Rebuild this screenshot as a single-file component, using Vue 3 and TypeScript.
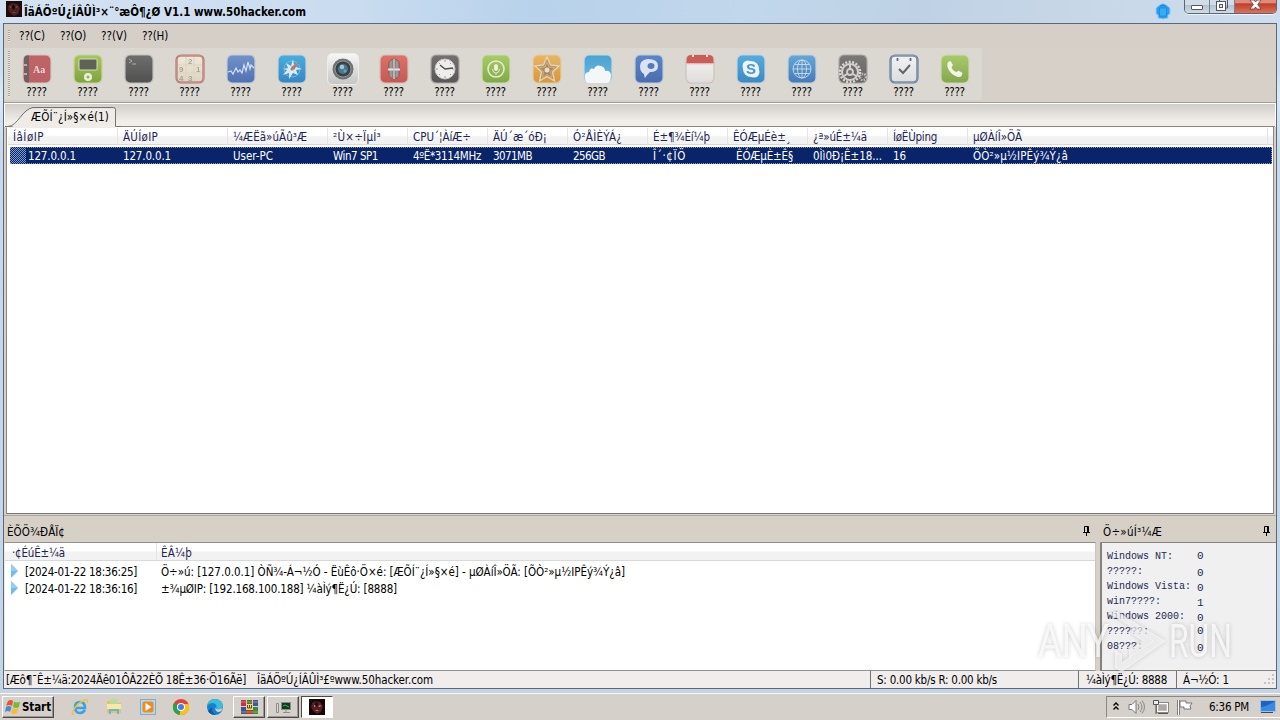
<script setup lang="ts">
import type { Directive } from 'vue'

// Spreads the letters of a label so that it takes up the given width in pixels.
const fitText = (el: HTMLElement, width: number) => {
  el.style.letterSpacing = '0px'
  const natural = el.getBoundingClientRect().width
  const count = (el.textContent ?? '').length
  if (count > 0) el.style.letterSpacing = `${(width - natural) / count}px`
}
const vFit: Directive<HTMLElement, number> = {
  mounted: (el, binding) => fitText(el, binding.value),
  updated: (el, binding) => fitText(el, binding.value),
}

interface Tool { name: string; top: string; bottom: string; edge: string }
interface Column { title: string; titleWidth: number; width: number; value: string; valueWidth: number; indent?: number }

const menus = ['??(C)', '??(O)', '??(V)', '??(H)']

const tools: Tool[] = [
  { name: 'book', top: '#bd5a5e', bottom: '#b8595d', edge: '#d8c4c0' },
  { name: 'player', top: '#a3c653', bottom: '#77a02f', edge: '#c7d3a4' },
  { name: 'terminal', top: '#666666', bottom: '#454545', edge: '#bdbdbd' },
  { name: 'numbers', top: '#f1ebd9', bottom: '#ddd5c2', edge: '#b9706b' },
  { name: 'wave', top: '#6a8dc9', bottom: '#4668b0', edge: '#c3cbd8' },
  { name: 'compass', top: '#3cabdf', bottom: '#2b7fc0', edge: '#c1d2dc' },
  { name: 'camera', top: '#fafafa', bottom: '#c4c4c4', edge: '#efefee' },
  { name: 'mic', top: '#dc6b60', bottom: '#c24f4a', edge: '#dcbdb7' },
  { name: 'clock', top: '#6d6969', bottom: '#4e4b4c', edge: '#a9a5a5' },
  { name: 'micgreen', top: '#a6cb61', bottom: '#78a63a', edge: '#cbdcaf' },
  { name: 'star', top: '#e9b45b', bottom: '#d99031', edge: '#e2cda6' },
  { name: 'cloud', top: '#3c9fd3', bottom: '#6ab5e2', edge: '#c6d7e0' },
  { name: 'chat', top: '#507fc5', bottom: '#3f64ad', edge: '#bdc8dc' },
  { name: 'calendar', top: '#fbfafa', bottom: '#dfdcdb', edge: '#c9c1bd' },
  { name: 'skype', top: '#4aa9df', bottom: '#2f82c4', edge: '#bed4e2' },
  { name: 'globe', top: '#5aa5d8', bottom: '#3972b8', edge: '#bfd0de' },
  { name: 'gear', top: '#747270', bottom: '#5b5a59', edge: '#a5a29f' },
  { name: 'tasks', top: '#f5f6f6', bottom: '#dcdddd', edge: '#60789a' },
  { name: 'phone', top: '#a7ca62', bottom: '#7da343', edge: '#cbdab4' },
]

const columns: Column[] = [
  { title: 'ÍâÍøIP', titleWidth: 31, width: 110, value: '127.0.0.1', valueWidth: 48, indent: 15 },
  { title: 'ÄÚÍøIP', titleWidth: 35, width: 110, value: '127.0.0.1', valueWidth: 48 },
  { title: '¼ÆËã»úÃû³Æ', titleWidth: 74, width: 100, value: 'User-PC', valueWidth: 40 },
  { title: '²Ù×÷ÏµÍ³', titleWidth: 48, width: 80, value: 'Win7 SP1', valueWidth: 45 },
  { title: 'CPU´¦ÀíÆ÷', titleWidth: 58, width: 80, value: '4ºË*3114MHz', valueWidth: 68 },
  { title: 'ÄÚ´æ´óÐ¡', titleWidth: 54, width: 80, value: '3071MB', valueWidth: 39 },
  { title: 'Ó²ÅÌÈÝÁ¿', titleWidth: 49, width: 80, value: '256GB', valueWidth: 32 },
  { title: 'É±¶¾Èí¼þ', titleWidth: 57, width: 80, value: 'Î´·¢ÏÖ', valueWidth: 33 },
  { title: 'ÊÓÆµÉè±¸', titleWidth: 58, width: 80, value: 'ÊÓÆµÈ±Ê§', valueWidth: 57, indent: 3 },
  { title: '¿ª»úÊ±¼ä', titleWidth: 54, width: 80, value: '0Ìì0Ð¡Ê±18...', valueWidth: 69 },
  { title: 'ÍøËÙping', titleWidth: 44, width: 80, value: '16', valueWidth: 13 },
  { title: 'µØÀíÎ»ÖÃ', titleWidth: 49, width: 300, value: 'ÕÒ²»µ½IPÊý¾Ý¿â', valueWidth: 95 },
]

const logs = [
  { time: '[2024-01-22 18:36:25]', text: 'Ö÷»ú: [127.0.0.1] ÒÑ¾-Á¬½Ó - ËùÊô·Ö×é: [ÆÕÍ¨¿Í»§×é] - µØÀíÎ»ÖÃ: [ÕÒ²»µ½IPÊý¾Ý¿â]', width: 464 },
  { time: '[2024-01-22 18:36:16]', text: '±¾µØIP: [192.168.100.188] ¼àÌý¶Ë¿Ú: [8888]', width: 236 },
]

const statNames = ['Windows NT:', '?????:', 'Windows Vista:', 'win7????:', 'Windows 2000:', '??????:', '08???:']
const statValues = [0, 0, 0, 1, 0, 0, 0]
</script>

<template>
  <div class="screen">
    <header class="titlebar">
      <svg class="app-icon" width="16" height="16" viewBox="0 0 16 16">
        <rect width="16" height="16" fill="#1c0c0e" />
        <path d="M3 4l3-2 5 1 3 4-2 6-4 2-4-3-2-4z" fill="#4b2223" />
        <path d="M3 5l3 1-2 1zM9 6l3-1-1 2zM6 11h4l-2 1z" fill="#b93a35" />
        <path d="M7 3l2 3-1 3-2-2z" fill="#0d0608" />
      </svg>
      <b class="title"><span v-fit="282">ÎäÁÖºÚ¿ÍÂÛÌ³×¨°æÔ¶¿Ø V1.1 www.50hacker.com</span></b>
      <span class="spacer"></span>
      <svg class="badge" width="18" height="18" viewBox="0 0 18 18">
        <path d="M5 3.500Q9 0 13 3.500l3 2.500v6l-2 1v3q-5 2-10 0v-3l-2-1V6z" fill="#2d9cec" stroke="#8bcff6" />
        <path d="M5.500 6h7v8h-7z" fill="#36aef6" stroke="#1b83d5" stroke-width=".7" />
        <path d="M6 4q3-2 6 0" fill="none" stroke="#1b83d5" />
      </svg>
      <div class="controls">
        <span class="control min">
          <svg width="26" height="13" viewBox="0 0 26 13"><rect x="6.500" y="5.500" width="11" height="4" rx=".5" fill="#fff" stroke="#535666" /></svg>
        </span>
        <span class="control max">
          <svg width="24" height="13" viewBox="0 0 24 13">
            <path d="M9.500 2V-1h8v9h-2" fill="none" stroke="#535666" />
            <rect x="6.500" y="1.500" width="9" height="9" fill="#fff" stroke="#535666" />
            <rect x="9.500" y="4.500" width="3" height="3" fill="#dfe6ee" stroke="#535666" />
          </svg>
        </span>
        <span class="control close">
          <svg width="42" height="13" viewBox="0 0 42 13">
            <path d="M15 0h4l1.500 2L22 0h4l-3.300 4.500L26 9h-4l-1.500-2L19 9h-4l3.300-4.500z" fill="#fff" stroke="#6b3a42" stroke-width=".8" />
          </svg>
        </span>
      </div>
    </header>

    <main class="client">
      <nav class="menubar">
        <i class="grip"></i>
        <span v-for="m in menus" :key="m" class="menu"><span v-fit="26">{{ m }}</span></span>
      </nav>

      <div class="toolrow">
        <div class="toolbar">
          <i class="grip tall"></i>
          <div v-for="t in tools" :key="t.name" class="tool">
            <svg class="tool-icon" width="32" height="32" viewBox="0 0 32 32">
              <defs>
                <linearGradient :id="'g-' + t.name" x1="0" y1="0" x2="0" y2="1">
                  <stop offset="0" :stop-color="t.top" />
                  <stop offset="1" :stop-color="t.bottom" />
                </linearGradient>
              </defs>
              <rect v-if="t.name === 'camera'" x=".5" y=".5" width="31" height="31" rx="5" fill="url(#g-camera)" :stroke="t.edge" />
              <rect v-else x="2" y="2" width="28" height="28" rx="5" :fill="'url(#g-' + t.name + ')'" :stroke="t.edge" stroke-width="1.200" />

              <g v-if="t.name === 'book'">
                <path d="M8 2.500H6q-3 0-3 4v19q0 4 3 4h2z" fill="#665756" />
                <path d="M3 12h3M3 21h3" stroke="#b9aaa7" stroke-width="2" />
                <text x="12" y="20" class="aa">Aa</text>
              </g>
              <g v-else-if="t.name === 'player'">
                <rect x="7" y="6" width="18" height="11" rx="1" fill="#55594e" stroke="#d5e1ae" />
                <circle cx="16" cy="24" r="4" fill="#eef2e2" /><circle cx="16" cy="24" r="1.500" fill="#8bae47" />
              </g>
              <g v-else-if="t.name === 'terminal'" fill="none" stroke="#aaa">
                <path d="M6 6l3 2-3 2M9 11h4" />
              </g>
              <g v-else-if="t.name === 'numbers'">
                <rect x="3" y="3" width="26" height="26" rx="4" fill="none" stroke="#bd817a" stroke-width="1.500" />
                <path d="M4 12h24M4 20h24M12 4v24M20 4v24" stroke="#ddd3be" fill="none" />
                <g class="digits"><text x="14" y="11">2</text><text x="5" y="19">9</text><text x="22" y="19">1</text><text x="5" y="27.500">4</text><text x="14" y="27.500">3</text></g>
              </g>
              <path v-else-if="t.name === 'wave'" d="M3 19l3-1 2 3 3-6 2 4 2-2 2 3 2-8 2 6 2-9 2 7 1-4 3 3" fill="none" stroke="#d3e2f5" stroke-width="1.200" />
              <g v-else-if="t.name === 'compass'">
                <circle cx="16" cy="16" r="8" fill="none" stroke="#6fc0e6" stroke-width=".8" />
                <path d="M17 6l1 6 4-2-2 4 6 2-6 1 2 5-5-2-4 6v-6l-6 2 4-5-4-1 5-1-2-5 5 3z" fill="#dceaf0" />
                <path d="M23 9l-5 8-3-3z" fill="#c9635b" /><circle cx="16" cy="16" r="1.500" fill="#798890" />
              </g>
              <g v-else-if="t.name === 'camera'">
                <circle cx="16" cy="16" r="10.500" fill="#666a6d" /><circle cx="16" cy="16" r="8" fill="#303437" stroke="#8b9194" />
                <circle cx="16" cy="16" r="5" fill="#3c7186" /><circle cx="15" cy="14" r="2.200" fill="#9ccbd6" /><circle cx="18" cy="18" r="1.500" fill="#62a0b2" />
              </g>
              <g v-else-if="t.name === 'mic'">
                <rect x="10.500" y="6" width="11" height="20" rx="5.500" fill="#858080" stroke="#a74a44" />
                <path d="M13 8v16M19 8v16" stroke="#a9a5a5" /><path d="M10 16.500h12" stroke="#e9e4e2" stroke-width="2" />
                <path d="M16 6v20" stroke="#c8c3c1" stroke-width="1.500" />
              </g>
              <g v-else-if="t.name === 'clock'">
                <circle cx="16" cy="16" r="10" fill="#f0efef" stroke="#c9c6c6" />
                <path d="M16 7v2M16 23v2M7 16h2M23 16h2M10 10l1 1M22 10l-1 1M10 22l1-1M22 22l-1-1" stroke="#999" />
                <path d="M11 12l5 4 8-1" fill="none" stroke="#444" stroke-width="1.500" />
              </g>
              <g v-else-if="t.name === 'micgreen'" fill="none" stroke="#e6f0d4">
                <circle cx="16" cy="16" r="8" stroke-width="1.500" /><rect x="14.500" y="11.500" width="3" height="6" rx="1.500" fill="#eff5e4" />
                <path d="M12.500 16q0 4 3.500 4t3.500-4M16 20v2" stroke-width=".9" />
              </g>
              <g v-else-if="t.name === 'star'">
                <path d="M16 4l3.500 8 8.500 1-6.500 6 2 9-7.500-4.500L8.500 28l2-9L4 13l8.500-1z" fill="#b78d57" stroke="#e9d7b8" stroke-width="1.300" />
                <path d="M16 9l2 5 6 .5-4.500 4 1 6-4.500-3-4.500 3 1-6-4.500-4 6-.5z" fill="#a58357" stroke="#c9ad84" /><circle cx="16" cy="17" r="2.500" fill="#eadfc8" />
              </g>
              <path v-else-if="t.name === 'cloud'" d="M3 25q-1-6 4-6 1-5 5-3 2-5 7-3 4 1 4 5 5-1 6 4l-.5 5q-1 3-4 3H7q-4 0-4-5z" fill="#f7fafc" />
              <g v-else-if="t.name === 'chat'">
                <path d="M7 13q0-6 8-7 10 0 10 7 0 6-8 6l-3 3-2 3q-1-2-1-4-4-2-4-8z" fill="#dce5f3" /><ellipse cx="18" cy="13" rx="3.500" ry="3" fill="#4a73b9" />
              </g>
              <g v-else-if="t.name === 'calendar'">
                <path d="M2.500 10.500V7q0-5 5-5h17q5 0 5 5v3.500z" fill="#c9544c" /><path d="M9 2v2M23 2v2" stroke="#f3d9d4" stroke-width="2" />
                <path d="M3 11h26" stroke="#e5c7c1" />
              </g>
              <g v-else-if="t.name === 'skype'">
                <circle cx="13" cy="13" r="5.500" fill="#eef6fa" /><circle cx="19" cy="19" r="5.500" fill="#eef6fa" /><circle cx="16" cy="16" r="8" fill="#eef6fa" />
                <text x="16" y="21" text-anchor="middle" class="skype-s">S</text>
              </g>
              <g v-else-if="t.name === 'globe'" fill="none" stroke="#c9dded" stroke-width=".9">
                <circle cx="16" cy="16" r="9" /><ellipse cx="16" cy="16" rx="4.500" ry="9" /><path d="M16 7v18M7 16h18M9 11.500h14M9 20.500h14" />
              </g>
              <g v-else-if="t.name === 'gear'">
                <circle cx="13" cy="19" r="10" fill="none" stroke="#dad7d5" stroke-width="2.500" stroke-dasharray="2 1.500" />
                <circle cx="13" cy="19" r="8" fill="none" stroke="#d3d0ce" stroke-width="2" />
                <path d="M13 12v4M7 23l3-2M19 23l-3-2" stroke="#d3d0ce" stroke-width="2" /><circle cx="13" cy="19" r="3" fill="#6b6968" stroke="#d3d0ce" stroke-width="1.800" />
                <circle cx="26" cy="24" r="3" fill="none" stroke="#bbb8b6" stroke-width="2.500" stroke-dasharray="1.500 1" />
              </g>
              <g v-else-if="t.name === 'tasks'">
                <rect x="3" y="3" width="26" height="26" rx="4" fill="none" stroke="#7089aa" stroke-width="1.600" />
                <path d="M9.500 5v3M22.500 5v3" stroke="#51657f" stroke-width="1.800" />
                <path d="M11 16l4 4 7-8" fill="none" stroke="#575d66" stroke-width="2" />
              </g>
              <path v-else-if="t.name === 'phone'" d="M9 9l2.500-1 2.500 4-1.500 2q1 4 5 5l2-1.500 4 2.500-1 3q-2 1.500-5 .5-7-3-9-9.500-.6-3 .5-5z" fill="#f4f8ea" />
            </svg>
            <span v-fit="20.500" class="tool-label">????</span>
          </div>
        </div>
      </div>

      <div class="tabs">
        <svg class="tab-shape" width="116" height="22" viewBox="0 0 116 22">
          <path d="M0 21.500h5C13 21 18 3 29 2.500h79.500q2 0 2 2V22H0z" fill="#efece7" />
          <path d="M0 20.500h3C13 20 17 3 28 1.500h80.500q2 0 2 2V20" fill="none" stroke="#77726e" />
          <path d="M110.500 20.500H116" stroke="#77726e" />
        </svg>
        <span class="tab-label"><span v-fit="78">ÆÕÍ¨¿Í»§×é(1)</span></span>
      </div>

      <section class="hosts">
        <div class="head">
          <span v-for="c in columns" :key="c.title" class="cell" :style="{ width: c.width + 'px' }"><span v-fit="c.titleWidth">{{ c.title }}</span></span>
        </div>
        <div class="row">
          <span v-for="c in columns" :key="c.title" class="cell" :style="{ width: c.width + 'px', paddingLeft: 5 + (c.indent ?? 0) + 'px' }"><span v-fit="c.valueWidth">{{ c.value }}</span></span>
          <i class="flag"></i>
        </div>
      </section>

      <div class="bottom">
        <section class="log">
          <div class="caption">
            <span v-fit="58">ÈÕÖ¾ÐÅÏ¢</span>
            <svg width="9" height="11" viewBox="0 0 9 11"><path d="M2.500 6V.5h4V6M5.500 1v5M1 6.500h7M4.500 7v3" fill="none" stroke="#000" /></svg>
          </div>
          <div class="loglist">
            <div class="head">
              <span class="cell time"><span v-fit="53">·¢ÉúÊ±¼ä</span></span>
              <span class="cell"><span v-fit="31">ÊÂ¼þ</span></span>
            </div>
            <div v-for="l in logs" :key="l.time" class="entry">
              <svg width="9" height="14" viewBox="0 0 9 14"><path d="M1 0l7 7-7 7z" fill="#6fbcec" /><path d="M1 0l7 7H1z" fill="#93cdf2" /></svg>
              <span class="stamp"><span v-fit="112">{{ l.time }}</span></span>
              <span v-fit="l.width">{{ l.text }}</span>
            </div>
          </div>
        </section>
        <section class="stats">
          <div class="caption">
            <span v-fit="59">Ö÷»úÍ³¼Æ</span>
            <svg width="9" height="11" viewBox="0 0 9 11"><path d="M2.500 6V.5h4V6M5.500 1v5M1 6.500h7M4.500 7v3" fill="none" stroke="#000" /></svg>
          </div>
          <div class="statbox">
            <div class="names"><span v-for="n in statNames" :key="n">{{ n }}</span></div>
            <div class="values"><span v-for="(v, i) in statValues" :key="i">{{ v }}</span></div>
          </div>
        </section>
      </div>

      <footer class="status">
        <span class="st start"><span v-fit="240">[Æô¶¯Ê±¼ä:2024Äê01ÔÂ22ÈÕ 18Ê±36·Ö16Ãë]</span></span>
        <span class="st site"><span v-fit="176">ÎäÁÖºÚ¿ÍÂÛÌ³£ºwww.50hacker.com</span></span>
        <span class="st rate"><span v-fit="120">S: 0.00 kb/s R: 0.00 kb/s</span></span>
        <span class="st port"><span v-fit="81">¼àÌý¶Ë¿Ú: 8888</span></span>
        <span class="st conn"><span v-fit="46">Á¬½Ó: 1</span></span>
        <svg class="sizer" width="12" height="12" viewBox="0 0 12 12"><path d="M9 1h2M9 5h2M9 9h2M5 5h2M5 9h2M1 9h2" stroke="#c8c4c0" stroke-width="2" /></svg>
      </footer>
    </main>

    <div class="taskbar">
      <div class="start-btn">
        <svg width="17" height="16" viewBox="0 0 17 16">
          <path d="M3 2q3-2 5 0L7 7Q4 5 1 7z" fill="#e9562b" /><path d="M9 2.500q3 2 6 0L14 8q-3 2-6 0z" fill="#7ab83c" />
          <path d="M1 8q3-2 5.500 0L5 13q-2-2-5 0z" fill="#3f8ddb" /><path d="M7.500 9q3 2 6 0L12 14q-3 2-6 0z" fill="#f6bd2c" />
        </svg>
        <b v-fit="29">Start</b>
      </div>
      <div class="quick">
        <svg width="18" height="18" viewBox="0 0 18 18">
          <path d="M14 12q-2 3-5 3-5 0-5-6 0-5 5-5t5 6H5" fill="none" stroke="#3aa4e2" stroke-width="2.600" />
          <path d="M3 16q-3 1-1-3Q6 5 14 2q4-1 2 3" fill="none" stroke="#efc23c" stroke-width="1.400" />
        </svg>
        <svg width="18" height="18" viewBox="0 0 18 18">
          <path d="M2 3h6l1 2h7v10H2z" fill="#e7c456" /><path d="M5 1h7v5H5z" fill="#b9dba0" /><path d="M2 6h14v5H2z" fill="#f8e8a3" /><path d="M4 16v-5h10v5h-2v-3H6v3z" fill="#69b4df" />
        </svg>
        <svg width="18" height="18" viewBox="0 0 18 18">
          <rect x="1.500" y="1.500" width="15" height="15" fill="#b4d9ef" stroke="#78aed0" /><rect x="3.500" y="3.500" width="11" height="11" rx="2" fill="#f28a1c" /><path d="M6.500 5l6 4-6 4z" fill="#fff" />
        </svg>
        <svg width="18" height="18" viewBox="0 0 18 18">
          <circle cx="9" cy="9" r="8" fill="#e34133" /><path d="M9 9L2 5a8 8 0 0 0 6 12z" fill="#2ba24c" /><path d="M9 9l-1.500 8A8 8 0 0 0 16.500 6H9z" fill="#fbc116" />
          <circle cx="9" cy="9" r="4" fill="#fff" /><circle cx="9" cy="9" r="3" fill="#3f80ea" />
        </svg>
        <svg width="18" height="18" viewBox="0 0 18 18">
          <circle cx="9" cy="9" r="8" fill="#1681d0" /><path d="M1 8Q3 1 9 1q8 1 8 7-1 4-7 3 2-5-3-6-4 0-6 3z" fill="#38bfdc" /><path d="M10 11q3 1 7-1-1 3-4 4-4 0-4-5z" fill="#d6cfc8" /><path d="M2 13q2 4 8 4-5-3-4-8z" fill="#0c59a4" />
        </svg>
      </div>
      <div class="tasks">
        <div class="task">
          <svg width="17" height="16" viewBox="0 0 17 16">
            <path d="M0 1h5v6H0z" fill="#c0304f" /><path d="M6 1h5v6H6z" fill="#4c7a2c" /><path d="M12 1h5v6h-5z" fill="#3c57a5" /><path d="M0 8h17v7H0z" fill="#9c4432" />
            <path d="M0 8h5v7H0z" fill="#3d529b" /><path d="M12 8h5v7h-5z" fill="#3f8a3a" /><path d="M5 5h7v6H5z" fill="#e7d58a" /><path d="M6.500 6v3h2V6v3h2V6" stroke="#634b24" fill="none" /><path d="M0 3h17M0 13h17" stroke="#e6b54d" stroke-width=".6" />
          </svg>
        </div>
        <div class="task">
          <svg width="17" height="16" viewBox="0 0 17 16"><rect x="6.500" y="3.500" width="9" height="7" fill="#143a1e" stroke="#85908a" /><path d="M8 7l2-1 4 2" stroke="#40b45d" fill="none" /><path d="M8 13.500h7M11 11v2" stroke="#8b918a" /><path d="M1.500 4.500h2v9h-2z" fill="#d9dad6" stroke="#8b918a" /></svg>
        </div>
        <div class="task active">
          <svg width="16" height="16" viewBox="0 0 16 16"><rect width="16" height="16" fill="#120608" /><path d="M3 4l3-2 5 1 3 4-2 6-4 2-4-3-2-4z" fill="#551f21" /><path d="M5 6l2 1-2 1zM9 7l3-1-1 2zM6 11h4l-2 1z" fill="#e89a92" /><path d="M7 2l2 3-1 3-2-2z" fill="#1d090b" /></svg>
        </div>
      </div>
      <span class="spacer"></span>
      <div class="tray">
        <svg width="8" height="12" viewBox="0 0 8 12"><path d="M1.500 4.500L4 2l2.500 2.500M1.500 8.500L4 6l2.500 2.500" fill="none" stroke="#000" stroke-width="1.400" /></svg>
        <svg width="18" height="16" viewBox="0 0 18 16"><path d="M1 5.500h3l4-4v13l-4-4H1z" fill="#fff" stroke="#777" /><path d="M10 5q2 3 0 6M12 3q4 5 0 10M14 1.500q5 6.500 0 13" fill="none" stroke="#888" /></svg>
        <svg width="18" height="16" viewBox="0 0 18 16"><rect x="5.500" y="4.500" width="10" height="8" fill="#aaa9a7" stroke="#fff" stroke-width="1.500" /><path d="M6 14.500h10" stroke="#555" /><rect x="4.500" y="3.500" width="12" height="10" fill="none" stroke="#666" stroke-width=".7" /><path d="M1.500 1.500h5v4h-5zM4 6v9" fill="#eee" stroke="#555" /></svg>
        <svg width="18" height="16" viewBox="0 0 18 16"><path d="M2.500 1v15" stroke="#666" stroke-width="2.500" /><path d="M2.500 1v15" stroke="#fff" /><path d="M4 2h6v2h6l-2 3 1 3H8V8H4z" fill="#fff" stroke="#777" /></svg>
        <span class="time"><span v-fit="40">6:36 PM</span></span>
        <svg width="16" height="14" viewBox="0 0 16 14"><rect x=".5" y=".5" width="15" height="11" fill="#1c63bd" stroke="#9cc4ea" /><path d="M1 7Q8 6 15 1v10H1z" fill="#3c8ae0" /><path d="M1 12.500h12" stroke="#3e464e" /></svg>
      </div>
    </div>

    <svg class="watermark" width="230" height="76" viewBox="0 0 230 76">
      <g class="mark-text">
        <text x="7" y="51" textLength="71" lengthAdjust="spacingAndGlyphs">ANY</text>
        <text x="138" y="51" textLength="63" lengthAdjust="spacingAndGlyphs">RUN</text>
      </g>
      <path d="M77 8l8-3 50 30-44 31-7-4V44l7 4v8l31-21-38-24z" class="mark-play" />
      <path d="M101 21l22 14-25 17v-8l13-9-10-7z" class="mark-play" />
    </svg>
  </div>
</template>

<style>
html, body { margin: 0; overflow: hidden; }
</style>

<style scoped>
.screen { position: relative; width: 1280px; height: 720px; overflow: hidden; display: flex; flex-direction: column; box-sizing: border-box; background: linear-gradient(#cbdff1 0 70px, #dbeaf5 95px, #c7d9ea 150px, #c3d4e5); font: 11.5px/14px "DejaVu Sans Condensed", "DejaVu Sans", sans-serif; font-stretch: condensed; color: #000; white-space: pre; }
.screen * { box-sizing: border-box; }
svg { display: block; flex: none; }
.spacer { flex: 1; }
.titlebar { height: 23px; flex: none; display: flex; align-items: flex-start; padding: 0 3px 0 6px; background: linear-gradient(100deg, #d5e2f1 0, #c9dcf0 28%, #b8d2eb 42%, #c1d7eb 58%, #bfd2e5 72%, #c6d6e7 82%, #cfdeec 100%); }
.app-icon { margin-top: 1px; }
.title { margin: 5px 0 0 2px; font-size: 11.5px; }
.title span, .tab-label span, .st > span, .cell > span, .stamp span, .menu span, .time span { display: inline-block; }
.badge { margin: 2px 12px 0 0; }
.controls { display: flex; height: 14px; border: 1px solid #5a6577; border-top: 0; border-radius: 0 0 5px 5px; overflow: hidden; box-shadow: 0 1px 0 #eaf3fa; }
.control { background: linear-gradient(#d2dce8 0 35%, #b1c0d1 36%, #cfdbe6); border-right: 1px solid #76818f; overflow: hidden; }
.control.min { width: 25px; }
.control.max { width: 25px; }
.control.close { width: 41px; border: 0; background: linear-gradient(#dc8d7e 0 20%, #c13e28 30%, #d8745a); }
.client { margin: 0 3px; height: 666px; flex: none; display: flex; flex-direction: column; border: 1px solid #59687b; background: #d6d0c9; }
.menubar { height: 24px; flex: none; display: flex; align-items: flex-start; background: #d6cfc8; }
.menu { margin: 5px 15px 0 0; }
.menu:nth-child(2) { margin-left: 9px; }
.grip { width: 2px; height: 12px; margin: 6px 0 0 4px; flex: none; background: repeating-linear-gradient(#a8a29c 0 1px, #e8e4df 1px 2px); }
.grip.tall { height: 46px; margin-top: 3px; }
.toolrow { height: 56px; flex: none; border-bottom: 1px solid #fff; box-shadow: inset 0 -1px #a19c97; }
.toolbar { width: 978px; height: 52px; display: flex; background: #dbd7d1; border-radius: 0 2px 2px 0; }
.tool { width: 51px; display: flex; flex-direction: column; align-items: center; padding-top: 5px; flex: none; }
.grip.tall + .tool { margin-left: 1px; }
.tool-icon { opacity: .92; }
.tool-label { margin: 0; }
.aa { font: bold 10px "Liberation Serif", serif; fill: #ead9d7; }
.digits { font: bold 8px "Liberation Sans", sans-serif; fill: #a0a48f; }
.skype-s { font: bold 15px "Liberation Sans", sans-serif; fill: #3a93d0; }
.tabs { position: relative; height: 23px; flex: none; background: linear-gradient(#d1cdc8, #f1eeea 75%); border-left: 1px solid #fff; border-right: 1px solid #fff; box-shadow: inset 0 -1px #8b8681; }
.tab-shape { position: absolute; left: 0; top: 2px; }
.tab-label { position: absolute; left: 26px; top: 6px; }
.hosts { height: 387px; flex: none; margin: 0 2px; background: #fff; border: 1px solid #8c8985; border-top: 0; border-bottom-color: #7b7875; padding: 1px 0 0 1px; }
.head { height: 17px; display: flex; background: linear-gradient(#fff 0 45%, #f2f2f3 55% 100%); border-bottom: 1px solid #d8d8d8; color: #1d2450; }
.cell { flex: none; padding: 2px 0 0 5px; border-right: 1px solid #e4e4e5; overflow: hidden; height: 17px; }
.row { position: relative; display: flex; height: 17px; margin: 2px 1px 0 2px; background: #0a246a; color: #fff; outline: 1px dotted #8996c3; outline-offset: -1px; }
.row .cell { border: 0; padding-top: 2px; margin: 0; }
.row .cell:first-child { margin-left: -2px; }
.flag { position: absolute; left: 0; top: 1px; width: 16px; height: 15px; background: repeating-conic-gradient(#0a246a 0 25%, #7f9bc9 0 50%) 0 0 / 2px 2px; }
.bottom { display: flex; flex: none; height: 156px; margin-top: 1px; border-top: 1px solid #aaa6a1; }
.log { width: 1092px; flex: none; }
.stats { flex: 1; margin-left: 4px; }
.caption { height: 26px; display: flex; justify-content: space-between; padding: 9px 5px 0 3px; background: #d6d0c7; }
.caption svg { margin-top: 1px; }
.loglist { height: 129px; background: #fff; border: 1px solid #94908c; border-right-color: #c9c5c0; border-left-color: #eceae7; }
.loglist .head { height: 18px; }
.loglist .cell { padding: 3px 0 0 7px; height: 17px; }
.loglist .cell.time { width: 152px; }
.loglist .cell + .cell { padding-left: 4px; border: 0; }
.entry { display: flex; height: 17px; padding: 4px 0 0 5px; }
.entry svg { margin-top: -1px; }
.stamp { width: 142px; padding-left: 6px; }
.statbox { height: 129px; display: flex; background: #f0f0f0; border: 1px solid #86827e; border-right: 0; border-left-width: 2px; font: 10px/15px "Liberation Mono", monospace; color: #222a50; }
.names { width: 95px; padding: 6px 0 0 5px; display: flex; flex-direction: column; }
.values { display: flex; flex-direction: column; padding-top: 6px; font-size: 11px; }
.values span:nth-child(n+2):nth-child(-n+5), .values span:last-child { position: relative; top: 2px; }
.status { position: relative; height: 17px; flex: 1; display: flex; background: #f0edec; }
.st { padding-top: 2px; flex: none; }
.start { padding-left: 2px; width: 253px; }
.site { width: 613px; }
.rate { width: 208px; padding-left: 6px; border-left: 1px solid #77736f; }
.port { width: 98px; padding-left: 7px; border-left: 1px solid #77736f; }
.conn { padding-left: 6px; border-left: 1px solid #77736f; }
.sizer { position: absolute; right: 1px; bottom: 2px; }
.taskbar { margin-top: 4px; flex: 1; display: flex; background: #d5d0c9; border-top: 1px solid #f8f7f5; }
.start-btn { width: 52px; height: 22px; margin: 2px 0 0 2px; display: flex; align-items: center; padding-left: 2px; border: 1px solid #fff; border-right-color: #4d4a47; border-bottom-color: #4d4a47; box-shadow: inset -1px -1px #9a9691; }
.quick { display: flex; gap: 15.8px; padding: 4px 0 0 17px; }
.quick svg { margin-top: 0; }
.tasks { display: flex; gap: 2px; margin: 2px 0 0 9px; }
.task { width: 32px; height: 22px; display: flex; align-items: center; justify-content: center; border: 1px solid #fff; border-right-color: #4d4a47; border-bottom-color: #4d4a47; box-shadow: inset -1px -1px #9a9691; }
.task.active { background: #fff; border-color: #4d4a47 #fff #fff #4d4a47; box-shadow: none; }
.tray { display: flex; align-items: center; width: 174px; height: 22px; margin-top: 2px; padding-left: 5px; border: 1px solid #8b8681; border-bottom-color: #fff; border-right: 0; gap: 6px; }
.tray .time { width: 42px; margin-left: 9px; }
.tray .time + svg { margin-left: 3px; }
.tray svg:nth-child(2) { margin-left: 2px; }
.watermark { position: absolute; left: 1031px; top: 606px; filter: drop-shadow(0 0 2px rgba(90, 90, 90, .4)); }
.mark-text { font: 46px "Roboto", "Open Sans", sans-serif; fill: rgba(255, 255, 255, .75); }
.mark-play { fill: rgba(255, 255, 255, .6); fill-rule: evenodd; }
</style>
